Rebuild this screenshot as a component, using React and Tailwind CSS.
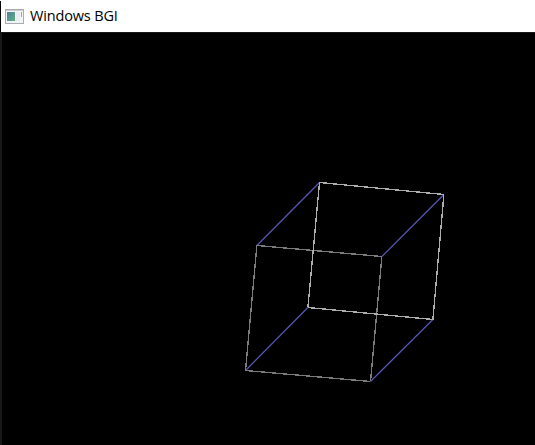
const backEdges = ['319,182 443.4,194', '443.4,194 432.4,319', '432.4,319 307.4,307', '307.4,307 319,182'];
const frontEdges = ['256.4,245 381.4,256', '381.4,256 370,381', '370,381 245,370', '245,370 256.4,245'];
const links = ['319,182 256.4,245', '443.4,194 381.4,256', '432.4,319 370,381', '307.4,307 245,370'];

function WindowIcon() {
  return (
    <svg className="h-[16px] w-[20px] shrink-0" viewBox="0 0 20 16" aria-hidden="true">
      <defs>
        <linearGradient id="pane" x1="0" y1="0" x2="1" y2="1">
          <stop offset="0" stopColor="#4b829b" />
          <stop offset="1" stopColor="#61ad83" />
        </linearGradient>
      </defs>
      <rect x="0.5" y="0.5" width="18" height="14" fill="#f3f4f5" stroke="#a9adb2" />
      <rect x="1" y="1" width="17" height="1" fill="#c9cdd2" />
      <rect x="2" y="3" width="8" height="9" fill="url(#pane)" />
      <rect x="11" y="3" width="4" height="9" fill="#e9edf1" />
      <rect x="16" y="3" width="1" height="5" fill="#7eb698" />
    </svg>
  );
}

function Edges({ edges, color, width, rendering }) {
  return edges.map((points) => (
    <polyline
      key={points}
      points={points}
      stroke={color}
      strokeWidth={width}
      shapeRendering={rendering}
      fill="none"
    />
  ));
}

export default function App() {
  return (
    <div className="flex h-[445px] w-[535px] flex-col overflow-hidden bg-white">
      <header className="mt-px flex h-[31px] items-center border-l border-black bg-white pl-1">
        <WindowIcon />
        <h1 className="ml-[5px] text-[14.5px] leading-none whitespace-nowrap text-black [font-family:'Open_Sans','Noto_Sans',sans-serif] tracking-[-0.15px]">
          Windows BGI
        </h1>
      </header>
      <main className="h-[413px] border-t border-l-2 border-t-[#181818] border-l-[#181818] bg-black">
        <svg className="block h-[412px] w-[533px]" viewBox="1.5 32.5 533 412">
          <Edges edges={links} color="#5858b8" width="1.2" rendering="geometricPrecision" />
          <Edges edges={frontEdges} color="#7b7b7b" width="1.35" rendering="crispEdges" />
          <Edges edges={backEdges} color="#adadad" width="1.35" rendering="crispEdges" />
        </svg>
      </main>
    </div>
  );
}
